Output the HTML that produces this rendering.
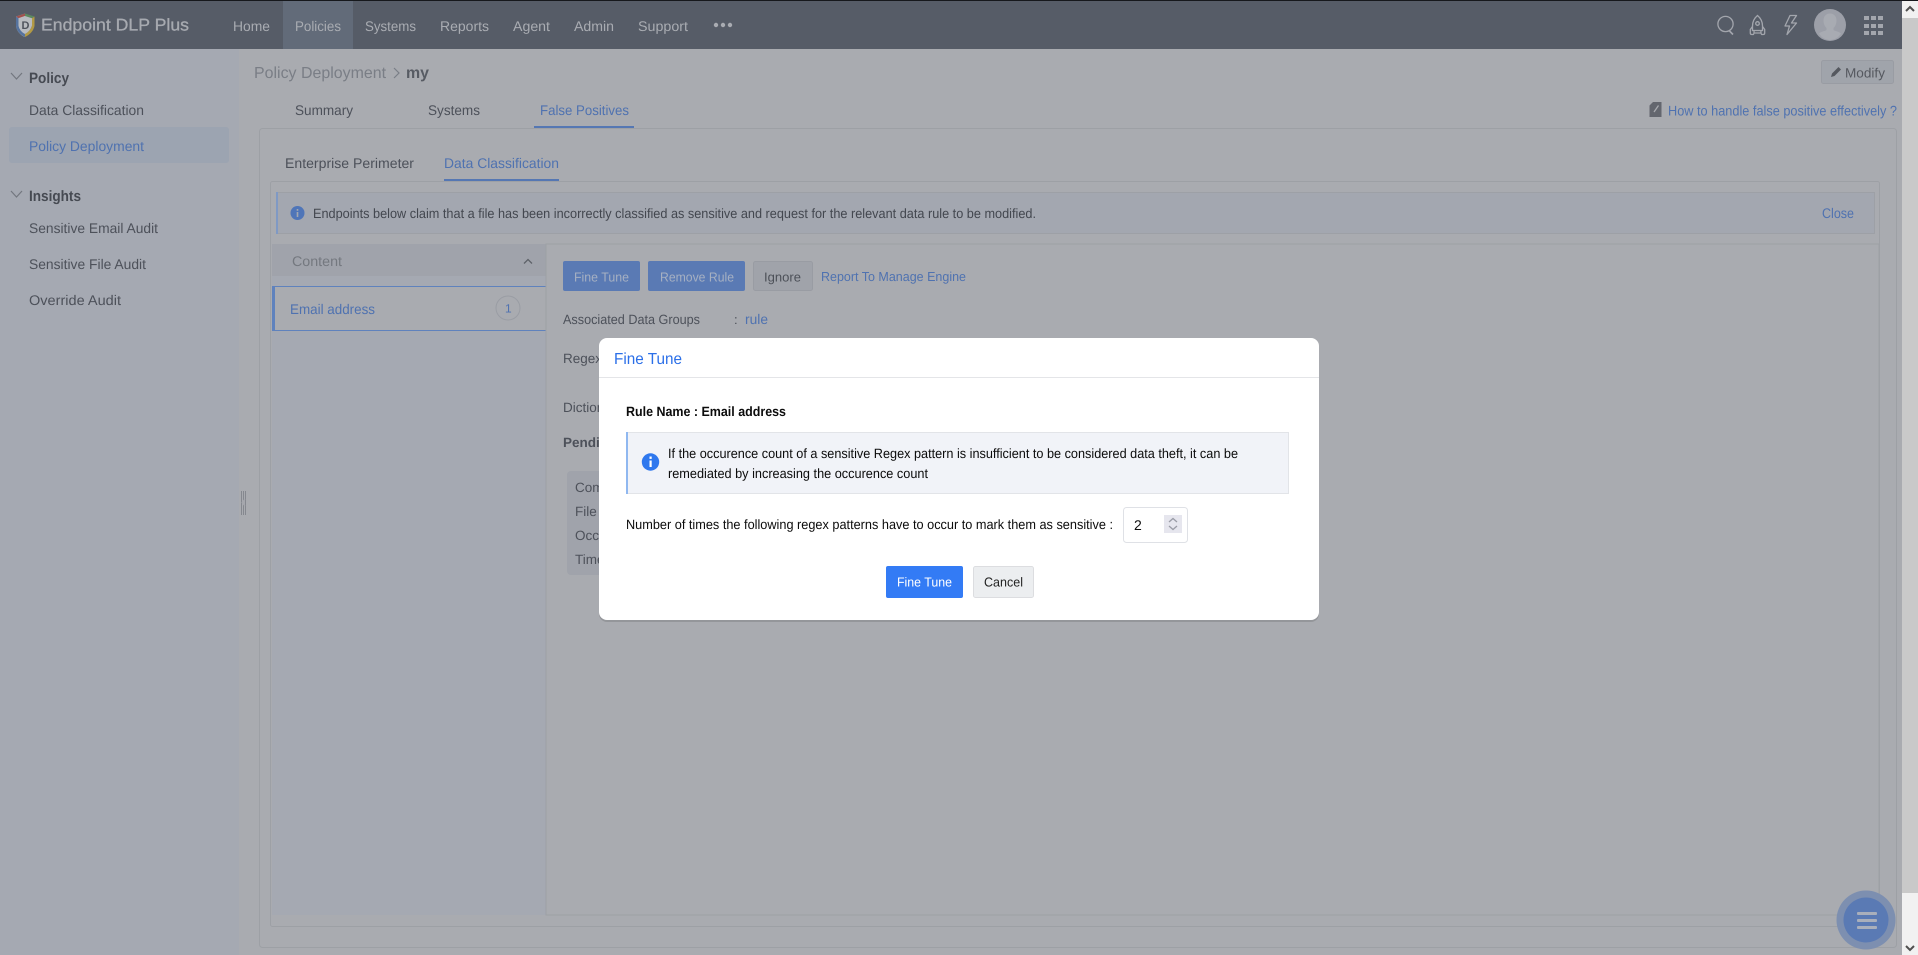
<!DOCTYPE html>
<html lang="en"><head><meta charset="utf-8"><title>Endpoint DLP Plus - Policy Deployment</title>
<style>
html,body{margin:0;padding:0;width:1918px;height:955px;overflow:hidden;background:#a9abb0}
svg{display:block;position:absolute;left:0;top:0}
text{font-family:"Liberation Sans",sans-serif;font-size:14px;fill:#4c5058;text-rendering:geometricPrecision}
.m{fill:#a9acb2;font-size:14px}
.b{fill:#4f72b0}
.g{fill:#7a7e86}
.k{fill:#0c0c0c}
.s{font-size:14px;fill:#4d515a}
.bd{font-weight:bold}
</style></head><body>
<svg width="1918" height="955" viewBox="0 0 1918 955" xmlns="http://www.w3.org/2000/svg">
<!-- backgrounds -->
<rect width="1918" height="955" fill="#a9abb0"/>
<rect x="0" y="49" width="239" height="906" fill="#a5a9b2"/>
<rect x="0" y="0" width="1902" height="1" fill="#16181c"/>
<rect x="1902" y="0" width="16" height="1" fill="#16181c"/>
<rect x="0" y="1" width="1902" height="48" fill="#565c67"/>
<rect x="283" y="1" width="70" height="48" fill="#626b79"/>

<!-- logo -->
<path d="M25 13.5 L16 16.5 L16 26 Q17 33 24.5 37 L25 25 Z" fill="#b9bcc1"/>
<path d="M16 16.5 L25 13.5 L25 16 L18.5 18.3 Z" fill="#a0524e"/>
<path d="M25 13.5 L34.5 16.5 L32 18.3 L25 16 Z" fill="#5c8a5f"/>
<path d="M34.5 16.5 L34.5 26 Q33 33 25 37 L25 34 Q30.5 31 32 25.5 L32 18.3 Z" fill="#b29a45"/>
<path d="M16 16.5 L16 26 Q17 33 25 37 L25 34 Q19.5 31 18.5 25.5 L18.5 18.3 Z" fill="#55739f"/>
<path d="M25 16 L32 18.3 L32 25.5 Q30.5 31 25 34 Q19.5 31 18.5 25.5 L18.5 18.3 Z" fill="#b9bcc1"/>
<text x="21.5" y="29" style="font-size:11px;font-weight:bold;fill:#4f545e">D</text>
<text x="41" y="30.5" textLength="148" lengthAdjust="spacingAndGlyphs" style="font-size:17px;fill:#a7aab0;stroke:#a7aab0;stroke-width:.3px">Endpoint DLP Plus</text>

<!-- menu -->
<g class="nav">
<text class="m" x="233" y="31" textLength="37" lengthAdjust="spacingAndGlyphs">Home</text>
<text class="m" x="295" y="31" textLength="46" lengthAdjust="spacingAndGlyphs">Policies</text>
<text class="m" x="365" y="31" textLength="51" lengthAdjust="spacingAndGlyphs">Systems</text>
<text class="m" x="440" y="31" textLength="49" lengthAdjust="spacingAndGlyphs">Reports</text>
<text class="m" x="513" y="31" textLength="37" lengthAdjust="spacingAndGlyphs">Agent</text>
<text class="m" x="574" y="31" textLength="40" lengthAdjust="spacingAndGlyphs">Admin</text>
<text class="m" x="638" y="31" textLength="50" lengthAdjust="spacingAndGlyphs">Support</text>
<circle cx="716" cy="25" r="2.2" fill="#a9acb2"/><circle cx="723" cy="25" r="2.2" fill="#a9acb2"/><circle cx="730" cy="25" r="2.2" fill="#a9acb2"/>
</g>

<!-- header icons -->
<g fill="none" stroke="#a3a6ad" stroke-width="1.3">
<circle cx="1725.5" cy="24" r="7.6"/><path d="M1729.5 31l3.5 3.5" stroke-width="1.6"/>
<path d="M1757.5 15.5c-3.6 3-5 6.5-5 10.5l0 4.5h10v-4.500c0-4-1.400-7.500-5-10.500z"/>
<circle cx="1757.500" cy="23.500" r="1.800"/>
<path d="M1752.500 26.500l-2.200 3v3.500q0 1.500 1.500 1.500h1.500q1-1 .7-3.500M1762.500 26.500l2.200 3v3.500q0 1.500-1.500 1.500h-1.500q-1-1-.7-3.500M1753.500 33h8"/>
<path d="M1790 15.500h6.500l-5 7.500h5l-9.500 11.500 2.500-8.500h-4.500z" stroke-linejoin="round"/>
</g>
<circle cx="1830" cy="25" r="16" fill="#9c9fa8"/>
<path d="M1830 13.500c-4 0-6.500 3-6.500 7 0 3 1.200 6 3 7.500l0 2c-2 1.300-5.500 1.500-7.500 3.500 2.500 4 6.500 6.500 11 6.500s8.500-2.500 11-6.500c-2-2-5.500-2.200-7.500-3.500l0-2c1.800-1.500 3-4.500 3-7.500 0-4-2.500-7-6.500-7z" fill="#a8abb2"/>
<g fill="#a3a6ad">
<rect x="1864" y="16" width="5" height="4"/><rect x="1871" y="16" width="5" height="4"/><rect x="1878" y="16" width="5" height="4"/>
<rect x="1864" y="24" width="5" height="4"/><rect x="1871" y="24" width="5" height="4"/><rect x="1878" y="24" width="5" height="4"/>
<rect x="1864" y="31" width="5" height="4"/><rect x="1871" y="31" width="5" height="4"/><rect x="1878" y="31" width="5" height="4"/>
</g>

<!-- sidebar -->
<path d="M11 73l5.500 6 5.500-6" fill="none" stroke="#73777f" stroke-width="1.200"/>
<text class="bd" x="29" y="83" textLength="40" lengthAdjust="spacingAndGlyphs" style="font-size:15px;fill:#464a52">Policy</text>
<text class="s" x="29" y="115" textLength="115" lengthAdjust="spacingAndGlyphs">Data Classification</text>
<rect x="9" y="127" width="220" height="36" rx="3" fill="#9ca4b1"/>
<text class="s" x="29" y="151" textLength="115" lengthAdjust="spacingAndGlyphs" style="fill:#4f72b0">Policy Deployment</text>
<path d="M11 191l5.500 6 5.500-6" fill="none" stroke="#73777f" stroke-width="1.200"/>
<text class="bd" x="29" y="201" textLength="52" lengthAdjust="spacingAndGlyphs" style="font-size:15px;fill:#464a52">Insights</text>
<text class="s" x="29" y="233" textLength="129" lengthAdjust="spacingAndGlyphs">Sensitive Email Audit</text>
<text class="s" x="29" y="269" textLength="117" lengthAdjust="spacingAndGlyphs">Sensitive File Audit</text>
<text class="s" x="29" y="305" textLength="92" lengthAdjust="spacingAndGlyphs">Override Audit</text>
<g fill="#85888f"><rect x="241" y="491" width="1" height="24"/><rect x="243" y="491" width="1" height="24"/><rect x="245" y="491" width="1" height="24"/></g>
<path d="M245 499l-3 3.500 3 3.500" fill="#a5a7ad" stroke="#a5a7ad"/>

<!-- breadcrumb -->
<text class="g" x="254" y="78" textLength="132" lengthAdjust="spacingAndGlyphs" style="font-size:16px">Policy Deployment</text>
<path d="M394 68l5 5-5 5" fill="none" stroke="#7a7e86" stroke-width="1.200"/>
<text class="bd" x="406" y="78" textLength="23" lengthAdjust="spacingAndGlyphs" style="font-size:16px;fill:#575b63">my</text>

<!-- Modify -->
<rect x="1821.500" y="60.500" width="72" height="23" rx="2" fill="#a0a4ab" stroke="#999ca3"/>
<path d="M1831 77l1-3.500 6.500-6.500 2.500 2.500-6.500 6.500z" fill="#55585f"/>
<text x="1845" y="77.500" textLength="40" lengthAdjust="spacingAndGlyphs" style="font-size:13.500px;fill:#55585f">Modify</text>

<!-- help link -->
<path d="M1653 102h8.500v15h-12v-11.500z" fill="#63666e"/>
<path d="M1654 112l4.500-6.500" stroke="#a9abb0" stroke-width="1.300" fill="none"/>
<text class="b" x="1668" y="115.500" textLength="229" lengthAdjust="spacingAndGlyphs">How to handle false positive effectively ?</text>

<!-- tabs -->
<text class="s" x="295" y="115" textLength="58" lengthAdjust="spacingAndGlyphs">Summary</text>
<text class="s" x="428" y="115" textLength="52" lengthAdjust="spacingAndGlyphs">Systems</text>
<text class="b" x="540" y="115" textLength="89" lengthAdjust="spacingAndGlyphs">False Positives</text>
<rect x="259.500" y="128.500" width="1637" height="819" rx="3" fill="#a9abb0" stroke="#9da0a5"/>
<rect x="534" y="126" width="100" height="2" fill="#5577b3"/>
<text class="s" x="285" y="168" textLength="129" lengthAdjust="spacingAndGlyphs">Enterprise Perimeter</text>
<text class="b" x="444" y="168" textLength="115" lengthAdjust="spacingAndGlyphs">Data Classification</text>
<rect x="270.500" y="181.500" width="1609" height="745" rx="2" fill="#a9abb0" stroke="#9da0a5"/>
<rect x="444" y="179" width="115" height="2" fill="#5577b3"/>

<!-- banner -->
<rect x="276.500" y="192.500" width="1598" height="41" fill="#a3a7b0" stroke="#9da0a6"/>
<rect x="276" y="192" width="2" height="42" fill="#7f99c4"/>
<circle cx="297.500" cy="213" r="7" fill="#4f75b8"/>
<rect x="296.700" y="212" width="1.600" height="5" fill="#a3a7b0"/><rect x="296.700" y="209" width="1.600" height="1.800" fill="#a3a7b0"/>
<text x="313" y="218" textLength="723" lengthAdjust="spacingAndGlyphs" style="font-size:13.500px;fill:#43474f">Endpoints below claim that a file has been incorrectly classified as sensitive and request for the relevant data rule to be modified.</text>
<text class="b" x="1822" y="218" textLength="32" lengthAdjust="spacingAndGlyphs">Close</text>

<!-- left list -->
<rect x="272" y="244" width="274" height="671" fill="#a5a9b2"/>
<rect x="272" y="244" width="274" height="32" fill="#a0a3ab"/>
<text x="292" y="266" textLength="50" lengthAdjust="spacingAndGlyphs" style="fill:#74787f">Content</text>
<path d="M524 263.500l4-4 4 4" fill="none" stroke="#5e6269" stroke-width="1.300"/>
<rect x="272" y="286" width="274" height="45" fill="#a9abb0"/>
<rect x="272" y="286" width="274" height="1" fill="#5f82bd"/><rect x="272" y="330" width="274" height="1" fill="#5f82bd"/><rect x="272" y="286" width="3" height="45" fill="#5f82bd"/>
<text class="b" x="290" y="314" textLength="85" lengthAdjust="spacingAndGlyphs">Email address</text>
<circle cx="508" cy="308" r="12" fill="none" stroke="#9a9da4"/>
<text class="b" x="505" y="312.500" style="font-size:12px">1</text>

<!-- right panel -->
<rect x="546" y="244" width="1333" height="671" fill="#a9abb0" stroke="#9da0a5"/>
<rect x="563" y="261" width="77" height="30" rx="2" fill="#5a7ab4"/>
<text x="574" y="281.500" textLength="55" lengthAdjust="spacingAndGlyphs" style="font-size:13px;fill:#a6b0c2">Fine Tune</text>
<rect x="648" y="261" width="97" height="30" rx="2" fill="#5a7ab4"/>
<text x="660" y="281.500" textLength="74" lengthAdjust="spacingAndGlyphs" style="font-size:13px;fill:#a6b0c2">Remove Rule</text>
<rect x="753.500" y="261.500" width="59" height="29" rx="2" fill="#a0a3aa" stroke="#999ca3"/>
<text x="764" y="281.500" textLength="37" lengthAdjust="spacingAndGlyphs" style="font-size:13px;fill:#4c5058">Ignore</text>
<text class="b" x="821" y="281" textLength="145" lengthAdjust="spacingAndGlyphs" style="font-size:13px">Report To Manage Engine</text>
<text class="s" x="563" y="324" textLength="137" lengthAdjust="spacingAndGlyphs" style="font-size:13.500px">Associated Data Groups</text>
<text x="734" y="324" style="font-size:13px">:</text>
<text class="b" x="745" y="324" textLength="23" lengthAdjust="spacingAndGlyphs">rule</text>
<text class="s" x="563" y="363" style="font-size:13.500px">Regex Patterns</text>
<text class="s" x="563" y="412" style="font-size:13.500px">Dictionaries</text>
<text class="s bd" x="563" y="447" style="font-size:13.500px">Pending Requests</text>
<rect x="567" y="471" width="120" height="104" rx="4" fill="#a0a3ab"/>
<text class="s" x="575" y="492" style="font-size:13.500px">Comments</text>
<text class="s" x="575" y="516" style="font-size:13.500px">File Name</text>
<text class="s" x="575" y="540" style="font-size:13.500px">Occurence</text>
<text class="s" x="575" y="564" style="font-size:13.500px">Time</text>

<!-- floating button -->
<circle cx="1866" cy="920" r="29.500" fill="#7d8fb0"/>
<circle cx="1866" cy="920" r="22.500" fill="#5a7ab4"/>
<g fill="#a9afbb"><rect x="1857" y="912" width="20" height="3" rx="1"/><rect x="1857" y="919" width="20" height="3" rx="1"/><rect x="1857" y="926" width="20" height="3" rx="1"/></g>

<!-- scrollbar -->
<rect x="1902" y="1" width="16" height="954" fill="#f1f1f1"/>
<rect x="1902" y="18" width="16" height="875" fill="#c9c9c9"/>
<path d="M1906 11l4-4 4 4" fill="none" stroke="#4f4f4f" stroke-width="2"/>
<path d="M1906 946l4 4 4-4" fill="none" stroke="#4f4f4f" stroke-width="2"/>

<!-- modal -->
<rect x="599" y="338" width="720" height="282" rx="8" fill="#000" opacity=".12" transform="translate(0 2)"/>
<rect x="599" y="338" width="720" height="282" rx="8" fill="#fff"/>
<rect x="599" y="377" width="720" height="1" fill="#e4e5e8"/>
<text x="614" y="364" textLength="68" lengthAdjust="spacingAndGlyphs" style="font-size:16px;fill:#2b6fe8">Fine Tune</text>
<text class="k bd" x="626" y="416" textLength="160" lengthAdjust="spacingAndGlyphs" style="font-size:13.500px">Rule Name : Email address</text>
<rect x="626.500" y="432.500" width="662" height="61" fill="#f1f3f8" stroke="#e2e4e8"/>
<rect x="626" y="432" width="2" height="62" fill="#90b8f0"/>
<circle cx="650.500" cy="462" r="8.700" fill="#2f78ee"/>
<rect x="649.500" y="460.500" width="2.200" height="6.500" fill="#fff"/><rect x="649.500" y="456.500" width="2.200" height="2.400" fill="#fff"/>
<text class="k" x="668" y="458" textLength="570" lengthAdjust="spacingAndGlyphs" style="font-size:13.500px">If the occurence count of a sensitive Regex pattern is insufficient to be considered data theft, it can be</text>
<text class="k" x="668" y="478" textLength="260" lengthAdjust="spacingAndGlyphs" style="font-size:13.500px">remediated by increasing the occurence count</text>
<text class="k" x="626" y="529" textLength="487" lengthAdjust="spacingAndGlyphs" style="font-size:13.500px">Number of times the following regex patterns have to occur to mark them as sensitive :</text>
<rect x="1123.500" y="507.500" width="64" height="35" rx="3" fill="#fff" stroke="#dfe1e6"/>
<text class="k" x="1134" y="530" style="font-size:14px">2</text>
<rect x="1164" y="515" width="18" height="18" fill="#e6e6ee"/>
<path d="M1169 522l4-3.500 4 3.500M1169 526l4 3.500 4-3.500" fill="none" stroke="#9a9ca6" stroke-width="1.300"/>
<rect x="886" y="566" width="77" height="32" rx="2" fill="#337bf5"/>
<text x="897" y="586.500" textLength="55" lengthAdjust="spacingAndGlyphs" style="font-size:13px;fill:#fff">Fine Tune</text>
<rect x="973.500" y="566.500" width="60" height="31" rx="2" fill="#eceef0" stroke="#dcdde0"/>
<text x="984" y="586.500" textLength="39" lengthAdjust="spacingAndGlyphs" style="font-size:13px;fill:#222">Cancel</text>
</svg>
</body></html>
